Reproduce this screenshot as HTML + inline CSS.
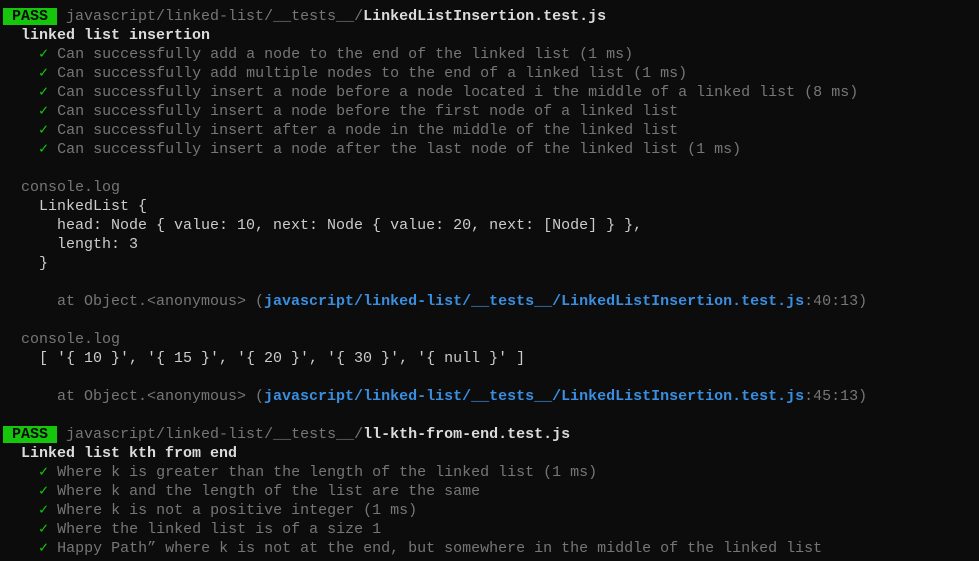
<!DOCTYPE html>
<html><head><meta charset="utf-8"><style>
html,body{margin:0;padding:0;background:#0c0c0c;width:979px;height:561px;overflow:hidden}
pre{margin:0;padding:7px 0 0 3px;font-family:"Liberation Mono",monospace;font-size:15px;line-height:19px;color:#cccccc;white-space:pre}
.g{color:#767676}.c{color:#16c60c}.b{font-weight:bold;color:#dcdcdc}
.p{background:#16c60c;color:#0c0c0c;font-weight:bold}
.l{color:#3a8ee0;font-weight:bold}
</style></head><body><pre><span class="p"> PASS </span> <span class="g">javascript/linked-list/__tests__/</span><span class="b">LinkedListInsertion.test.js</span>
  <span class="b">linked list insertion</span>
    <span class="c">✓</span> <span class="g">Can successfully add a node to the end of the linked list (1 ms)</span>
    <span class="c">✓</span> <span class="g">Can successfully add multiple nodes to the end of a linked list (1 ms)</span>
    <span class="c">✓</span> <span class="g">Can successfully insert a node before a node located i the middle of a linked list (8 ms)</span>
    <span class="c">✓</span> <span class="g">Can successfully insert a node before the first node of a linked list</span>
    <span class="c">✓</span> <span class="g">Can successfully insert after a node in the middle of the linked list</span>
    <span class="c">✓</span> <span class="g">Can successfully insert a node after the last node of the linked list (1 ms)</span>

  <span class="g">console.log</span>
    LinkedList {
      head: Node { value: 10, next: Node { value: 20, next: [Node] } },
      length: 3
    }

<span class="g">      at Object.&lt;anonymous&gt; (</span><span class="l">javascript/linked-list/__tests__/LinkedListInsertion.test.js</span><span class="g">:40:13)</span>

  <span class="g">console.log</span>
    [ '{ 10 }', '{ 15 }', '{ 20 }', '{ 30 }', '{ null }' ]

<span class="g">      at Object.&lt;anonymous&gt; (</span><span class="l">javascript/linked-list/__tests__/LinkedListInsertion.test.js</span><span class="g">:45:13)</span>

<span class="p"> PASS </span> <span class="g">javascript/linked-list/__tests__/</span><span class="b">ll-kth-from-end.test.js</span>
  <span class="b">Linked list kth from end</span>
    <span class="c">✓</span> <span class="g">Where k is greater than the length of the linked list (1 ms)</span>
    <span class="c">✓</span> <span class="g">Where k and the length of the list are the same</span>
    <span class="c">✓</span> <span class="g">Where k is not a positive integer (1 ms)</span>
    <span class="c">✓</span> <span class="g">Where the linked list is of a size 1</span>
    <span class="c">✓</span> <span class="g">Happy Path” where k is not at the end, but somewhere in the middle of the linked list</span>
</pre></body></html>
